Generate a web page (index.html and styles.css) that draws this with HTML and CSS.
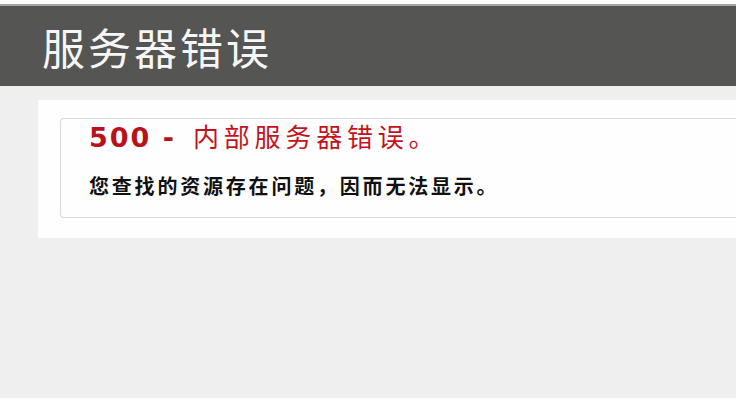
FILE: index.html
```html
<!DOCTYPE html>
<html lang="zh-CN">
<head>
<meta charset="utf-8">
<title>500 - 内部服务器错误。</title>
<link rel="stylesheet" href="styles.css">
</head>
<body>
<div class="page">
  <div class="header"><h1 class="title">服务器错误</h1></div>
  <div class="content">
    <div class="panel">
      <div class="box">
        <h2 class="code"><span class="num">500 -</span><span class="msg">内部服务器错误。</span></h2>
        <h3 class="desc">您查找的资源存在问题，因而无法显示。</h3>
      </div>
    </div>
  </div>
</div>
</body>
</html>
```
FILE: styles.css
```css
html, body {
  margin: 0;
  padding: 0;
  background: #ffffff;
}
.page {
  width: 736px;
  margin-top: 4px;
  border-top: 2px solid #a4a5a3;
  background: #efefef;
  height: 394px;
  box-sizing: border-box;
  font-family: "Noto Sans CJK SC", sans-serif;
}
.header {
  height: 80px;
  background: #555653;
  display: flex;
  align-items: center;
  padding-left: 42px;
}
.title {
  margin: 0;
  color: #f6f6f6;
  font-size: 43px;
  font-weight: 400;
  letter-spacing: 3px;
  line-height: 1;
}
.content {
  padding: 14px 0 0 38px;
}
.panel {
  background: #fefefe;
  padding: 18px 0 20px 22px;
}
.box {
  border: 1px solid #dadada;
  border-right: none;
  border-radius: 4px 0 0 4px;
  height: 100px;
  box-sizing: border-box;
  padding: 1px 0 0 28px;
}
.code {
  margin: 0;
  line-height: 32px;
  font-weight: 400;
  color: #c3141c;
  display: flex;
  align-items: baseline;
}
.num {
  font-family: "DejaVu Sans", sans-serif;
  font-weight: 700;
  font-size: 27px;
  letter-spacing: 2px;
  color: #b8121b;
  margin-right: 17px;
}
.msg {
  font-family: "Noto Sans CJK SC", sans-serif;
  font-size: 26px;
  letter-spacing: 4.8px;
}
.desc {
  margin: 20px 0 0 0;
  font-size: 20px;
  line-height: 24px;
  font-weight: 700;
  letter-spacing: 2.8px;
  color: #111111;
}
```
